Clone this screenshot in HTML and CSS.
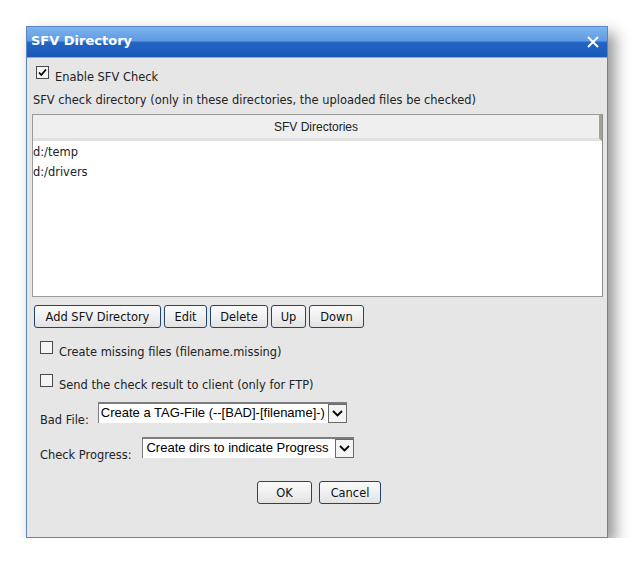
FILE: index.html
```html
<!DOCTYPE html>
<html>
<head>
<meta charset="utf-8">
<link rel="stylesheet" href="styles.css">
</head>
<body>
<div class="dialog">
  <div class="titlebar">
    <span class="title">SFV Directory</span>
    <svg class="close" width="12" height="12" viewBox="0 0 12 12"><path d="M1 1 L11 11 M11 1 L1 11" stroke="#fff" stroke-width="2" fill="none"/></svg>
  </div>
  <div class="content">
    <div class="check check-top">
      <span class="box"><svg width="11" height="11" viewBox="0 0 11 11"><path d="M2 5.5 L4.3 8 L9 2.5" stroke="#000" stroke-width="1.8" fill="none"/></svg></span>
      <span class="check-label">Enable SFV Check</span>
    </div>
    <div class="desc">SFV check directory (only in these directories, the uploaded files be checked)</div>
    <div class="list">
      <div class="list-head">SFV Directories</div>
      <div class="list-body">
        <div class="item">d:/temp</div>
        <div class="item">d:/drivers</div>
      </div>
    </div>
    <div class="btnrow">
      <button class="btn w-add">Add SFV Directory</button>
      <button class="btn w-edit">Edit</button>
      <button class="btn w-del">Delete</button>
      <button class="btn w-up">Up</button>
      <button class="btn w-down">Down</button>
    </div>
    <div class="check check-opt">
      <span class="box"></span>
      <span class="check-label">Create missing files (filename.missing)</span>
    </div>
    <div class="check check-opt">
      <span class="box"></span>
      <span class="check-label">Send the check result to client (only for FTP)</span>
    </div>
    <div class="field field-bad">
      <span class="field-label">Bad File:</span>
      <div class="select">
        <span class="select-text">Create a TAG-File (--[BAD]-[filename]-)</span>
        <span class="arrow"><svg width="11" height="7" viewBox="0 0 11 7"><path d="M1 1 L5.5 5.5 L10 1" stroke="#000" stroke-width="1.8" fill="none"/></svg></span>
      </div>
    </div>
    <div class="field field-prog">
      <span class="field-label label-prog">Check Progress:</span>
      <div class="select">
        <span class="select-text text-prog">Create dirs to indicate Progress</span>
        <span class="arrow"><svg width="11" height="7" viewBox="0 0 11 7"><path d="M1 1 L5.5 5.5 L10 1" stroke="#000" stroke-width="1.8" fill="none"/></svg></span>
      </div>
    </div>
    <div class="actions">
      <button class="btn w-ok">OK</button>
      <button class="btn w-cancel">Cancel</button>
    </div>
  </div>
</div>
</body>
</html>
```

FILE: styles.css
```css
html, body {
  margin: 0;
  padding: 0;
  background: #ffffff;
}
body {
  padding: 26px 0 0 26px;
  font-family: "DejaVu Sans", Verdana, sans-serif;
  font-size: 11.45px;
  line-height: 14px;
  color: #222;
}
.dialog {
  width: 580px;
  height: 510px;
  border: 1px solid #5b86c6;
  background: #e6e6e6;
  box-shadow: 7px 7px 14px rgba(0,0,0,0.42);
  display: flex;
  flex-direction: column;
}
.titlebar {
  height: 30px;
  flex: none;
  background: linear-gradient(to bottom, #7db4ef 0%, #5f9be2 45%, #2364c3 52%, #1b58b5 100%);
  display: flex;
  align-items: flex-start;
  justify-content: space-between;
  padding: 0 8px 0 4px;
  border-bottom: 1px solid #8fa9cf;
}
.title {
  color: #fff;
  font-family: "DejaVu Sans", Verdana, sans-serif;
  font-weight: bold;
  font-size: 13px;
  line-height: 16px;
  margin-top: 6px;
}
.close { margin-top: 9px; }
.content {
  flex: 1;
  padding: 0 4px 0 5px;
  display: flex;
  flex-direction: column;
}
.check {
  display: flex;
  align-items: flex-start;
}
.box {
  width: 11px;
  height: 11px;
  border: 1px solid #4a4a4a;
  background: #f4f4f4;
  display: flex;
  align-items: center;
  justify-content: center;
  flex: none;
}
.check-label {
  margin-top: 4px;
  margin-left: 6px;
}
.check-top {
  margin-top: 8px;
  margin-left: 4px;
}
.desc {
  margin-top: 9px;
  margin-left: 1px;
}
.list {
  margin-top: 7px;
  height: 181px;
  border: 1px solid #9a9a9a;
  border-right-color: #8c8c8c;
  background: #fff;
  display: flex;
  flex-direction: column;
}
.list-head {
  height: 23px;
  background: #efefef;
  border-bottom: 3px solid #e2e2e2;
  border-right: 3px solid #a2a292;
  font-family: "Liberation Sans", Arial, sans-serif;
  font-size: 12px;
  color: #222;
  display: flex;
  align-items: center;
  justify-content: center;
}
.list-body {
  flex: 1;
  padding-top: 1px;
}
.item {
  height: 20px;
  line-height: 20px;
}
.btnrow {
  margin-top: 8px;
  margin-left: 2px;
  display: flex;
  gap: 3px;
}
.btn {
  height: 23px;
  border: 1px solid #21466e;
  border-radius: 3px;
  background: linear-gradient(to bottom, #fbfbfb 0%, #f0f0f0 50%, #e2e2e2 100%);
  font-family: "DejaVu Sans", Verdana, sans-serif;
  font-size: 11.45px;
  color: #111;
  padding: 0;
}
.w-add { width: 127px; }
.w-edit { width: 43px; }
.w-del { width: 58px; }
.w-up { width: 35px; }
.w-down { width: 55px; }
.w-ok { width: 55px; }
.w-cancel { width: 62px; }
.check-opt {
  margin-left: 8px;
  margin-top: 13px;
}
.check-opt + .check-opt {
  margin-top: 15px;
}
.field {
  display: flex;
  align-items: flex-start;
  margin-left: 8px;
}
.field-label {
  margin-top: 11px;
  margin-right: 9px;
}
.label-prog { margin-right: 11px; }
.field-bad { margin-top: 10px; }
.field-prog { margin-top: 10px; }
.select {
  display: flex;
  align-items: stretch;
  height: 19px;
  border-top: 2px solid #7c7c7c;
  border-left: 1px solid #7c7c7c;
  background: #fff;
}
.select-text {
  font-family: "Liberation Sans", Arial, sans-serif;
  font-size: 13px;
  color: #000;
  padding: 0 3px 0 2px;
  line-height: 17px;
}
.text-prog { padding: 0 6px 0 3px; }
.arrow {
  width: 17px;
  border: 1px solid #6a6a6a;
  background: #f4f4f4;
  display: flex;
  align-items: center;
  justify-content: center;
}
.actions {
  margin-top: 19px;
  display: flex;
  justify-content: center;
  gap: 7px;
  padding-left: 3px;
}
```
